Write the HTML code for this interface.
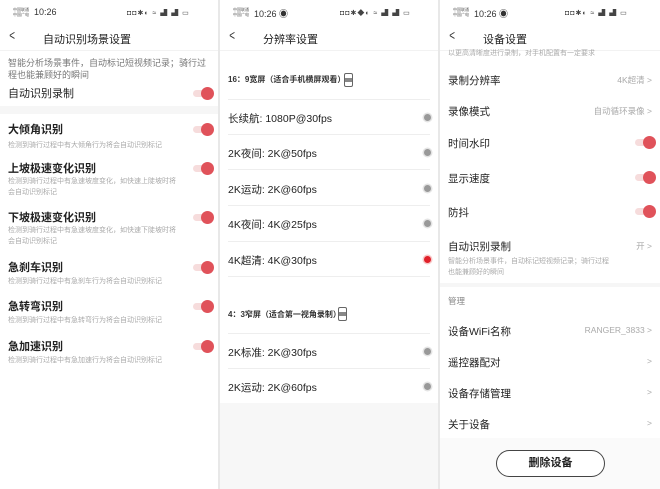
<!DOCTYPE html><html><head><meta charset="utf-8"><style>
*{margin:0;padding:0;box-sizing:border-box}
body{width:660px;height:489px;overflow:hidden;background:#e8e8e8;font-family:"Liberation Sans","Noto Sans CJK SC",sans-serif;position:relative;color:#222}
.p{position:absolute;top:0;height:489px;background:#fff;overflow:hidden}
.a{position:absolute;white-space:nowrap}
.sb{font-size:4px;color:#555}
.tm{font-size:9px;color:#333}
.ic{font-size:7px;color:#444;letter-spacing:1px}
.t{font-size:11px;color:#222;left:43px;top:31px}
.bk{left:8px;top:27px;font-size:14px;color:#333;transform:scaleX(.7)}
.h{font-size:11px;font-weight:bold;color:#222}
.s{font-size:7px;color:#aaa;line-height:11px}
.tg{position:absolute;width:16px;height:7px;border-radius:4px;background:#f6dcdc}
.tg:after{content:"";position:absolute;right:-5px;top:-3.5px;width:13px;height:13px;border-radius:50%;background:#e0525a}
.ln{position:absolute;height:1px;background:#eee}
.r{font-size:10.5px;color:#222}
.dot{position:absolute;width:7px;height:7px;border-radius:50%;background:#999;box-shadow:0 0 0 1.5px #e4e4e4}
.gr{font-size:8.5px;color:#aaa}
</style></head><body>
<!-- left -->
<div class="p" style="left:0;width:218px">
<div class="a sb" style="left:13px;top:7px;line-height:5px">中国联通<br>中国广电</div><div class="a tm" style="left:34px;top:7px">10:26</div><div class="a ic" style="left:127px;top:8px">◘◘✱◐ ≈ ▟ ▟ ▭</div>
<div class="a bk">&lt;</div><div class="a t">自动识别场景设置</div>
<div class="ln" style="left:0;right:0;top:50px;background:#f2f2f2"></div>
<div class="a" style="left:8px;top:57px;font-size:9px;color:#777;line-height:12px;white-space:normal;width:205px">智能分析场景事件，自动标记短视频记录；骑行过程也能兼顾好的瞬间</div>
<div class="a h" style="left:8px;top:85px;font-weight:normal">自动识别录制</div><div class="tg" style="left:193px;top:90px"></div>
<div style="position:absolute;left:0;right:0;top:106px;height:8px;background:#f6f6f6"></div>
<div class="a h" style="left:8px;top:121px">大倾角识别</div><div class="tg" style="left:193px;top:126px"></div><div class="a s" style="left:8px;top:140px">检测到骑行过程中有大倾角行为将会自动识别标记</div>
<div class="a h" style="left:8px;top:160px">上坡极速变化识别</div><div class="tg" style="left:193px;top:165px"></div><div class="a s" style="left:8px;top:176px">检测到骑行过程中有急速坡度变化，如快速上陡坡时将<br>会自动识别标记</div>
<div class="a h" style="left:8px;top:209px">下坡极速变化识别</div><div class="tg" style="left:193px;top:214px"></div><div class="a s" style="left:8px;top:225px">检测到骑行过程中有急速坡度变化，如快速下陡坡时将<br>会自动识别标记</div>
<div class="a h" style="left:8px;top:259px">急刹车识别</div><div class="tg" style="left:193px;top:264px"></div><div class="a s" style="left:8px;top:276px">检测到骑行过程中有急刹车行为将会自动识别标记</div>
<div class="a h" style="left:8px;top:298px">急转弯识别</div><div class="tg" style="left:193px;top:303px"></div><div class="a s" style="left:8px;top:315px">检测到骑行过程中有急转弯行为将会自动识别标记</div>
<div class="a h" style="left:8px;top:338px">急加速识别</div><div class="tg" style="left:193px;top:343px"></div><div class="a s" style="left:8px;top:355px">检测到骑行过程中有急加速行为将会自动识别标记</div>
</div>
<!-- middle -->
<div class="p" style="left:220px;width:218px">
<div class="a sb" style="left:13px;top:7px;line-height:5px">中国联通<br>中国广电</div><div class="a tm" style="left:34px;top:7px">10:26 ◉</div><div class="a ic" style="left:120px;top:8px">◘◘✱◆◐ ≈ ▟ ▟ ▭</div>
<div class="a bk">&lt;</div><div class="a t">分辨率设置</div>
<div class="ln" style="left:0;right:0;top:50px;background:#f2f2f2"></div>
<div class="a" style="left:8px;top:74px;font-size:8px;font-weight:bold;color:#333">16：9宽屏（适合手机横屏观看）</div><div style="position:absolute;left:124px;top:73px;width:9px;height:14px;border:1px solid #666;border-radius:2px;background:linear-gradient(#fff 35%,#888 35%,#888 65%,#fff 65%)"></div>
<div class="ln" style="left:8px;right:8px;top:99px"></div>
<div class="a r" style="left:8px;top:111px">长续航: 1080P@30fps</div><div class="dot" style="left:204px;top:114px"></div><div class="ln" style="left:8px;right:8px;top:134px"></div>
<div class="a r" style="left:8px;top:146px">2K夜间: 2K@50fps</div><div class="dot" style="left:204px;top:149px"></div><div class="ln" style="left:8px;right:8px;top:169px"></div>
<div class="a r" style="left:8px;top:182px">2K运动: 2K@60fps</div><div class="dot" style="left:204px;top:185px"></div><div class="ln" style="left:8px;right:8px;top:205px"></div>
<div class="a r" style="left:8px;top:217px">4K夜间: 4K@25fps</div><div class="dot" style="left:204px;top:220px"></div><div class="ln" style="left:8px;right:8px;top:241px"></div>
<div class="a r" style="left:8px;top:253px">4K超清: 4K@30fps</div><div class="dot" style="left:204px;top:256px;background:#e0202a;box-shadow:0 0 0 1.5px #f8c8c8"></div><div class="ln" style="left:8px;right:8px;top:276px"></div>
<div class="a" style="left:8px;top:309px;font-size:8px;font-weight:bold;color:#333">4：3窄屏（适合第一视角录制）</div><div style="position:absolute;left:118px;top:307px;width:9px;height:14px;border:1px solid #666;border-radius:2px;background:linear-gradient(#fff 35%,#888 35%,#888 65%,#fff 65%)"></div>
<div class="ln" style="left:8px;right:8px;top:333px"></div>
<div class="a r" style="left:8px;top:345px">2K标准: 2K@30fps</div><div class="dot" style="left:204px;top:348px"></div><div class="ln" style="left:8px;right:8px;top:368px"></div>
<div class="a r" style="left:8px;top:380px">2K运动: 2K@60fps</div><div class="dot" style="left:204px;top:383px"></div>
<div style="position:absolute;left:0;right:0;top:403px;bottom:0;background:#f7f7f7"></div>
</div>
<!-- right -->
<div class="p" style="left:440px;width:220px">
<div class="a sb" style="left:13px;top:7px;line-height:5px">中国联通<br>中国广电</div><div class="a tm" style="left:34px;top:7px">10:26 ◉</div><div class="a ic" style="left:125px;top:8px">◘◘✱◐ ≈ ▟ ▟ ▭</div>
<div class="a bk">&lt;</div><div class="a t">设备设置</div>
<div class="ln" style="left:0;right:0;top:50px;background:#f2f2f2"></div>
<div class="a s" style="left:8px;top:48px">以更高清晰度进行录制，对手机配置有一定要求</div>
<div class="a r" style="left:8px;top:73px">录制分辨率</div><div class="a gr" style="right:8px;top:74px">4K超清 &gt;</div>
<div class="a r" style="left:8px;top:104px">录像模式</div><div class="a gr" style="right:8px;top:105px">自动循环录像 &gt;</div>
<div class="a r" style="left:8px;top:136px">时间水印</div><div class="tg" style="left:195px;top:139px"></div>
<div class="a r" style="left:8px;top:171px">显示速度</div><div class="tg" style="left:195px;top:174px"></div>
<div class="a r" style="left:8px;top:205px">防抖</div><div class="tg" style="left:195px;top:208px"></div>
<div class="a r" style="left:8px;top:239px">自动识别录制</div><div class="a gr" style="right:8px;top:240px">开 &gt;</div>
<div class="a s" style="left:8px;top:256px">智能分析场景事件，自动标记短视频记录；骑行过程<br>也能兼顾好的瞬间</div>
<div style="position:absolute;left:0;right:0;top:283px;height:4px;background:#f6f6f6"></div>
<div class="a gr" style="left:8px;top:295px;color:#888">管理</div>
<div class="a r" style="left:8px;top:324px">设备WiFi名称</div><div class="a gr" style="right:8px;top:325px">RANGER_3833 &gt;</div>
<div class="a r" style="left:8px;top:355px">遥控器配对</div><div class="a gr" style="right:8px;top:356px">&gt;</div>
<div class="a r" style="left:8px;top:386px">设备存储管理</div><div class="a gr" style="right:8px;top:387px">&gt;</div>
<div class="a r" style="left:8px;top:417px">关于设备</div><div class="a gr" style="right:8px;top:418px">&gt;</div>
<div style="position:absolute;left:0;right:0;top:438px;bottom:0;background:#fafafa"></div>
<div style="position:absolute;left:56px;top:450px;width:109px;height:27px;border:1px solid #444;border-radius:14px;background:#fff;text-align:center;line-height:25px;font-size:11px;font-weight:bold">删除设备</div>
</div>
</body></html>
